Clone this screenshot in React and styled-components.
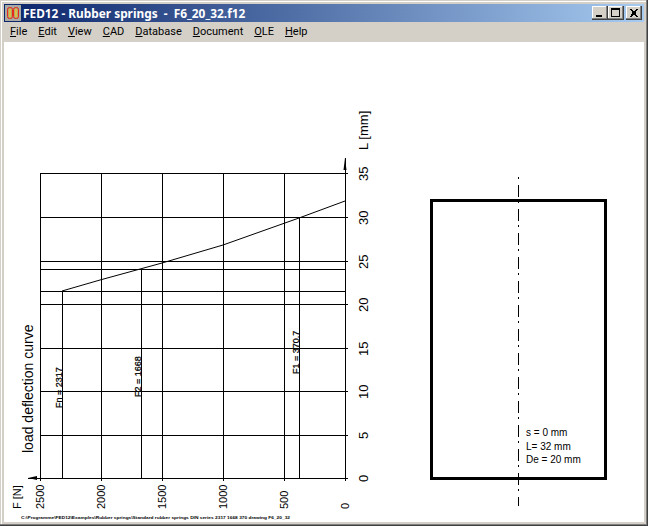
import React from 'react';
import styled, { createGlobalStyle } from 'styled-components';

const GlobalStyle = createGlobalStyle`
  html, body {
    margin: 0;
    padding: 0;
    background: #d4d0c8;
  }
`;

const Window = styled.div`
  box-sizing: border-box;
  display: flex;
  flex-direction: column;
  width: 648px;
  height: 526px;
  padding: 4px;
  background: #d4d0c8;
  box-shadow: inset -1px -1px 0 #404040, inset -2px -2px 0 #808080, inset 1px 1px 0 #d4d0c8, inset 2px 2px 0 #ffffff;
`;

const TitleBar = styled.div`
  display: flex;
  align-items: center;
  flex: none;
  height: 18px;
  padding: 0 2px 0 1px;
  background: linear-gradient(90deg, #0a246a, #a6caf0);
`;

const TitleIcon = styled.svg`
  flex: none;
  width: 16px;
  height: 16px;
  margin-right: 2px;
`;

const TitleText = styled.div`
  flex: 1;
  color: #fff;
  font: bold 11.85px 'Noto Sans', sans-serif;
  white-space: pre;
`;

const CaptionButton = styled.button`
  display: flex;
  align-items: center;
  justify-content: center;
  box-sizing: border-box;
  width: 16px;
  height: 14px;
  margin: 0 0 0 ${({ $gap }) => $gap || 0}px;
  padding: 0;
  border: 0;
  background: #d4d0c8;
  box-shadow: inset -1px -1px 0 #404040, inset -2px -2px 0 #808080, inset 1px 1px 0 #fff;
`;

const CaptionGlyph = styled.svg`
  display: block;
  width: 16px;
  height: 14px;
  shape-rendering: crispEdges;
`;

const MenuBar = styled.nav`
  display: flex;
  align-items: center;
  gap: 11px;
  flex: none;
  height: 20px;
  padding-left: 6px;
  background: #d4d0c8;
`;

const MenuItem = styled.span`
  color: #000;
  font: 11px Roboto, sans-serif;
  line-height: 20px;

  u {
    text-underline-offset: 1px;
  }
`;

const Canvas = styled.main`
  flex: 1;
  min-height: 0;
  background: #fff;
`;

const Drawing = styled.svg`
  display: block;
  width: 640px;
  height: 480px;
`;

const Ink = styled.g`
  shape-rendering: crispEdges;
  stroke: #000;
  fill: none;
`;

const Curve = styled.polyline`
  stroke: #000;
  stroke-width: 1;
  fill: none;
`;

const Label = styled.text`
  fill: #000;
  stroke: ${({ $heavy }) => ($heavy ? '#000' : 'none')};
  stroke-width: 0.25px;
  font-family: 'Liberation Sans', Arial, sans-serif;
  font-size: ${({ $size }) => $size}px;
  font-weight: ${({ $bold }) => ($bold ? 700 : 400)};
`;

const menu = [
  ['F', 'ile'],
  ['E', 'dit'],
  ['V', 'iew'],
  ['C', 'AD'],
  ['D', 'atabase'],
  ['D', 'ocument'],
  ['O', 'LE'],
  ['H', 'elp'],
];

// page coordinates, the svg viewBox starts at the client corner
const gridX = [40, 101, 162, 223, 284, 345];
const gridY = [173, 217, 261, 304, 348, 391, 435, 478];
const marks = [
  [62, 291],
  [141, 269],
  [299, 217],
];
const xLabels = ['2500', '2000', '1500', '1000', '500', '0'];
const yLabels = ['0', '5', '10', '15', '20', '25', '30', '35'];

const Vertical = ({ x, y, size = 11, heavy, children }) => (
  <Label $size={size} $heavy={heavy} transform={`translate(${x} ${y}) rotate(-90)`}>
    {children}
  </Label>
);

const HLine = ({ y, x1, x2 }) => <line x1={x1} x2={x2} y1={y + 0.5} y2={y + 0.5} />;
const VLine = ({ x, y1, y2 }) => <line x1={x + 0.5} x2={x + 0.5} y1={y1} y2={y2} />;

export default function App() {
  return (
    <>
      <GlobalStyle />
      <Window>
        <TitleBar>
          <TitleIcon viewBox="0 0 16 16">
            <rect width="16" height="16" fill="#a8a8a4" />
            <rect x="2.5" y="2.5" width="5" height="11" rx="2" fill="#b8a070" stroke="#e82818" />
            <rect x="8.5" y="2.5" width="5" height="11" rx="2" fill="#b8a070" stroke="#e82818" />
            <path d="M5 4v8M11 4v8" stroke="#f0d820" strokeWidth="1.2" />
          </TitleIcon>
          <TitleText>{'FED12 - Rubber springs  -  F6_20_32.f12'}</TitleText>
          <CaptionButton aria-label="Minimize">
            <CaptionGlyph viewBox="0 0 16 14">
              <rect x="4" y="9" width="6" height="2" fill="#000" />
            </CaptionGlyph>
          </CaptionButton>
          <CaptionButton aria-label="Maximize">
            <CaptionGlyph viewBox="0 0 16 14">
              <path d="M3 2h9v9H3z M4 4v6h7V4z" fill="#000" fillRule="evenodd" />
            </CaptionGlyph>
          </CaptionButton>
          <CaptionButton aria-label="Close" $gap={2}>
            <CaptionGlyph viewBox="0 0 16 14">
              <path d="M4 3l7 8M11 3l-7 8M5 3l7 8M12 3l-7 8" stroke="#000" fill="none" />
            </CaptionGlyph>
          </CaptionButton>
        </TitleBar>
        <MenuBar>
          {menu.map(([first, rest]) => (
            <MenuItem key={first + rest}>
              <u>{first}</u>
              {rest}
            </MenuItem>
          ))}
        </MenuBar>
        <Canvas>
          <Drawing viewBox="4 42 640 480">
            <Ink>
              {gridY.map((y) => (
                <HLine key={y} y={y} x1={40} x2={348} />
              ))}
              {gridX.map((x) => (
                <VLine key={x} x={x} y1={173} y2={481} />
              ))}
              {marks.map(([x, y]) => (
                <VLine key={x} x={x} y1={y} y2={478} />
              ))}
              <HLine y={269} x1={40} x2={345} />
              <HLine y={291} x1={40} x2={345} />
              <VLine x={345} y1={158} y2={173} />
              <HLine y={478} x1={28} x2={40} />
            </Ink>
            <path d="M345 158l1.5 12h-3zM28 478l9-2v4z" fill="#000" />
            <Curve points="62,291 100,280 162,263 223,245 299,218 345,201" />

            {xLabels.map((text, i) => (
              <Vertical key={text} x={gridX[i] + 4} y={509}>
                {text}
              </Vertical>
            ))}
            {yLabels.map((text, i) => (
              <Vertical key={text} x={368} y={gridY[gridY.length - 1 - i] + (text.length > 1 ? 8 : 4)} size={13}>
                {text}
              </Vertical>
            ))}
            <Vertical x={368} y={150} size={13}>L [mm]</Vertical>
            <Vertical x={21} y={509}>F [N]</Vertical>
            <Vertical x={33} y={453} size={14}>load deflection curve</Vertical>
            <Vertical x={62} y={408} size={9} heavy>Fn = 2317</Vertical>
            <Vertical x={141} y={397} size={9} heavy>F2 = 1668</Vertical>
            <Vertical x={299} y={374} size={9} heavy>F1 = 370.7</Vertical>
            <Label $size={3.5} $bold x={21} y={519} textLength={269} lengthAdjust="spacingAndGlyphs">
              C:\Programme\FED12\Examples\Rubber springs\Standard rubber springs DIN series 2317 1668 370 drawing F6_20_32
            </Label>

            <rect x={431.5} y={200.5} width={174} height={278} fill="none" stroke="#000" strokeWidth="3" shapeRendering="crispEdges" />
            <line x1={518.5} x2={518.5} y1={177} y2={506} stroke="#000" strokeDasharray="12 4 2 6" strokeDashoffset="16" shapeRendering="crispEdges" />
            <Label $size={10} x={526} y={436}>s = 0 mm</Label>
            <Label $size={10} x={526} y={450}>L= 32 mm</Label>
            <Label $size={10} x={526} y={463}>De = 20 mm</Label>
          </Drawing>
        </Canvas>
      </Window>
    </>
  );
}
